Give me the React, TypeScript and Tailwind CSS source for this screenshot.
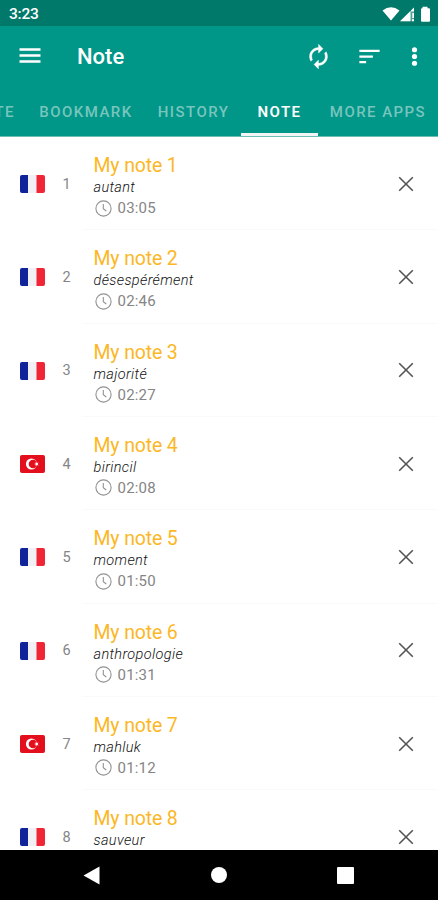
import type { ReactNode } from 'react';

type Country = 'fr' | 'tr';

interface Note {
  id: number;
  country: Country;
  word: string;
  time?: string;
}

const notes: Note[] = [
  { id: 1, country: 'fr', word: 'autant', time: '03:05' },
  { id: 2, country: 'fr', word: 'désespérément', time: '02:46' },
  { id: 3, country: 'fr', word: 'majorité', time: '02:27' },
  { id: 4, country: 'tr', word: 'birincil', time: '02:08' },
  { id: 5, country: 'fr', word: 'moment', time: '01:50' },
  { id: 6, country: 'fr', word: 'anthropologie', time: '01:31' },
  { id: 7, country: 'tr', word: 'mahluk', time: '01:12' },
  { id: 8, country: 'fr', word: 'sauveur' },
];

// The strip is scrolled, so the first tab only shows its tail
const tabs = [
  { label: 'TE', width: 'w-[26px] justify-end pr-[11px]' },
  { label: 'BOOKMARK', width: 'w-[120px] justify-center' },
  { label: 'HISTORY', width: 'w-[95px] justify-center' },
  { label: 'NOTE', width: 'w-[77px] justify-center' },
  { label: 'MORE APPS', width: 'w-[120px] justify-center' },
];

function Flag({ country }: { country: Country }) {
  if (country === 'tr') {
    return (
      <svg className="h-[18px] w-[25px]" viewBox="0 0 25 18">
        <rect width="25" height="18" rx="2" fill="#e30f1d" />
        <circle cx="11.4" cy="9" r="5.5" fill="#fff" />
        <circle cx="13" cy="9" r="4.3" fill="#e30f1d" />
        <path d="m14 9 1.7-.6.1-1.8 1.1 1.4 1.7-.5-1 1.5 1 1.5-1.7-.5-1.1 1.4-.1-1.8z" fill="#fff" />
      </svg>
    );
  }
  return (
    <svg className="h-[18px] w-[25px]" viewBox="0 0 25 18">
      <rect width="25" height="18" rx="2" fill="#f1f1f5" />
      <path d="M2 0h6v18H2a2 2 0 0 1-2-2V2a2 2 0 0 1 2-2z" fill="#10239a" />
      <path d="M16.5 0H23a2 2 0 0 1 2 2v14a2 2 0 0 1-2 2h-6.500z" fill="#f02636" />
    </svg>
  );
}

function IconButton({ className, label, children }: { className: string; label: string; children: ReactNode }) {
  return (
    <button aria-label={label} className={`flex shrink-0 items-center justify-center ${className}`}>
      {children}
    </button>
  );
}

function StatusBar() {
  return (
    <div className="flex h-[26px] shrink-0 items-center justify-between bg-[#00796b] pt-[2px] pr-[7px] pl-[9px] text-white">
      <span className="pt-[2px] text-[15.5px] leading-none font-medium tracking-[-0.2px]">3:23</span>
      <svg className="h-[16px] w-[50px]" viewBox="381 5 50 16" fill="currentColor">
        <path d="M382.5 9.5q8.500-6.600 17 0L391 19.500z" />
        <path d="M400 20.3 414 6.500v13.800z" fillOpacity="0.3" />
        <path d="M400 20.3 410.500 9.900v10.400zM411 9.500l3-3v4h-3zM412.300 12h1.700v5h-1.700zM412 18.300h2v2h-2z" />
        <path d="M422.5 5.800h5v1.500h1.500q1 0 1 1v11.400q0 1-1 1h-7q-1 0-1-1V8.300q0-1 1-1h.5z" />
      </svg>
    </div>
  );
}

function Toolbar() {
  return (
    <header className="flex h-[60px] shrink-0 items-center text-white">
      <IconButton label="Menu" className="ml-[17px] h-6 w-[26px]">
        <svg className="h-[16px] w-[22px]" viewBox="0 0 22 16" stroke="currentColor" strokeWidth="2.5">
          <path d="M.5 1.500h21M.5 7.500h21M.5 13.500h21" />
        </svg>
      </IconButton>
      <h1 className="ml-[34px] flex-1 pt-px text-[22px] leading-none font-medium">Note</h1>
      <IconButton label="Sync" className="h-[27px] w-[27px]">
        <svg className="h-[27px] w-[27px]" viewBox="0 0 24 24" fill="currentColor" stroke="currentColor" strokeWidth="0.3">
          <path d="M12 6v3l4-4-4-4v3c-4.420 0-8 3.580-8 8 0 1.570.460 3.030 1.240 4.260L6.700 14.800A5.870 5.870 0 0 1 6 12c0-3.310 2.690-6 6-6zm6.760 1.740L17.300 9.200c.440.840.700 1.790.700 2.800 0 3.310-2.690 6-6 6v-3l-4 4 4 4v-3c4.420 0 8-3.580 8-8 0-1.570-.460-3.030-1.240-4.260z" />
        </svg>
      </IconButton>
      <IconButton label="Sort" className="ml-[24px] h-[27px] w-[27px]">
        <svg className="h-[27px] w-[27px]" viewBox="0 0 24 24" fill="currentColor">
          <path d="M3 18h6v-2H3v2zM3 6v2h18V6H3zm0 7h12v-2H3v2z" />
        </svg>
      </IconButton>
      <IconButton label="More" className="mr-[10px] ml-[18px] h-[27px] w-[27px]">
        <svg className="h-[27px] w-[27px]" viewBox="0 0 24 24" fill="currentColor">
          <circle cx="12" cy="6" r="2.3" />
          <circle cx="12" cy="12" r="2.3" />
          <circle cx="12" cy="18" r="2.3" />
        </svg>
      </IconButton>
    </header>
  );
}

function Tabs() {
  return (
    <nav className="flex h-[51px] shrink-0 overflow-hidden border-b border-[#6dbdb5] text-[15px] font-medium tracking-[1.45px]">
      {tabs.map((tab) => {
        const active = tab.label === 'NOTE';
        return (
          <div
            key={tab.label}
            className={`flex shrink-0 items-center border-b-[3px] pt-[6px] whitespace-nowrap ${tab.width} ${
              active ? 'border-[#f2f5f5] font-semibold text-white' : 'border-transparent text-[#78c5bd]'
            }`}
          >
            {tab.label}
          </div>
        );
      })}
    </nav>
  );
}

function NoteRow({ note }: { note: Note }) {
  return (
    <li className="flex h-[93.33px] shrink-0 items-center">
      <div className="ml-[19.5px] flex w-[25px] shrink-0 pt-px">
        <Flag country={note.country} />
      </div>
      <span className="ml-[11px] w-[22px] pt-[2px] text-center text-[14.5px] text-[#858585]">{note.id}</span>
      <div className="ml-[4px] flex h-full flex-1 flex-col border-b border-[#fafafa] pt-[17px] pl-[12px]">
        <span className="text-[19.5px] leading-[24px] tracking-[-0.15px] text-[#fbb726]">My note {note.id}</span>
        <span className="text-[14.5px] leading-[20px] font-light tracking-[0.35px] text-[#111] italic">
          {note.word}
        </span>
        {note.time && (
          <span className="flex items-center text-[15px] leading-[20px] tracking-[0.2px] text-[#858585]">
            <svg className="mr-[6px] ml-px h-[17px] w-[17px]" viewBox="0 0 17 17" fill="none" stroke="#929292">
              <circle cx="8.5" cy="8.5" r="7.6" strokeWidth="1.1" />
              <path d="M8.3 4v4.800l3 2.200" strokeWidth="1.1" />
            </svg>
            {note.time}
          </span>
        )}
      </div>
      <div className="flex h-full w-10 shrink-0 items-center border-b border-[#fafafa] pt-px">
        <IconButton label="Delete" className="h-4 w-4">
          <svg className="h-4 w-4" viewBox="0 0 16 16" stroke="#555" strokeWidth="1.6">
            <path d="m1.200 1.200 13.600 13.600M14.800 1.200 1.200 14.800" />
          </svg>
        </IconButton>
      </div>
    </li>
  );
}

function NavigationBar() {
  return (
    <footer className="flex h-[50px] shrink-0 items-center bg-black pl-[83px] text-white">
      <svg className="h-[19px] w-[17px]" viewBox="0 0 17 19" fill="currentColor">
        <path d="M.5 9.500 16.500.5v18z" />
      </svg>
      <div className="ml-[111px] h-4 w-4 rounded-full bg-white" />
      <div className="ml-[110px] h-[17px] w-[17px] rounded-[1px] bg-white" />
    </footer>
  );
}

export default function App() {
  return (
    <div className="flex h-[900px] w-[438px] flex-col overflow-hidden bg-white font-['Roboto',sans-serif]">
      <div className="flex shrink-0 flex-col bg-[#009688]">
        <StatusBar />
        <Toolbar />
        <Tabs />
      </div>
      <ul className="flex min-h-0 flex-1 flex-col overflow-hidden">
        {notes.map((note) => (
          <NoteRow key={note.id} note={note} />
        ))}
      </ul>
      <NavigationBar />
    </div>
  );
}
